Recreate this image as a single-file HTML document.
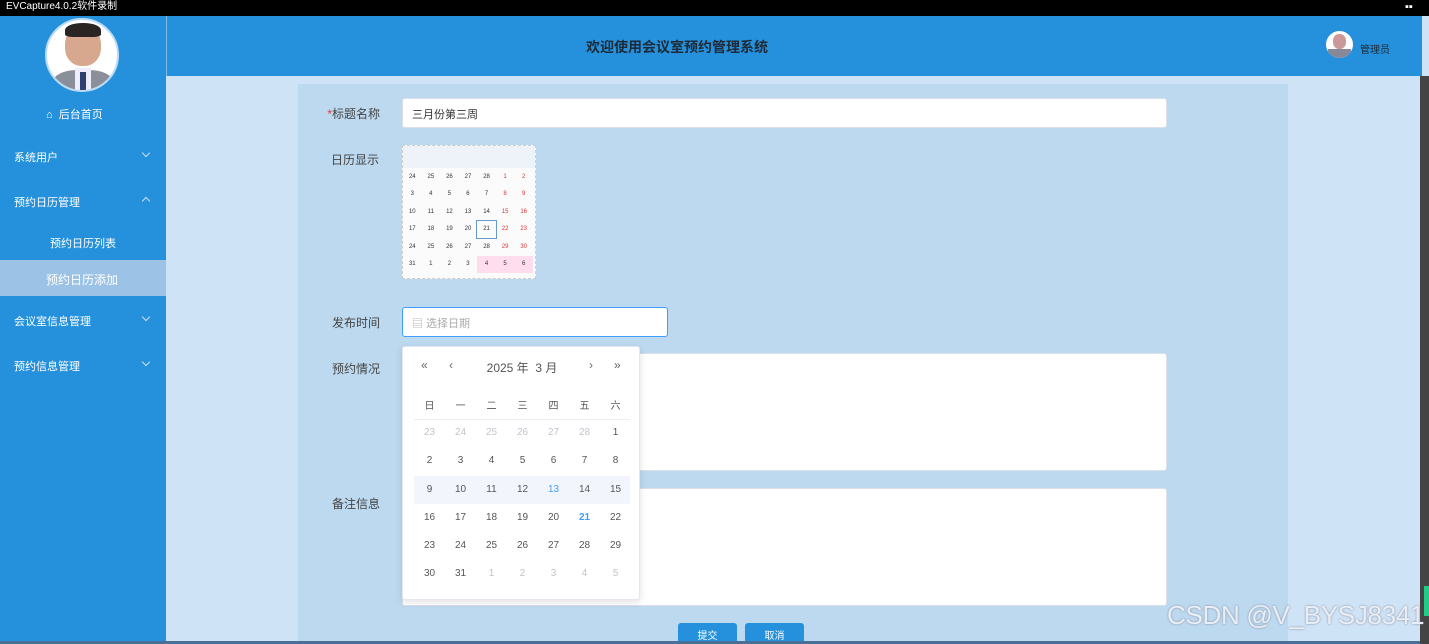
<!DOCTYPE html>
<html><head><meta charset="utf-8"><style>
*{margin:0;padding:0;box-sizing:border-box}
html,body{width:1429px;height:644px;overflow:hidden}
body{position:relative;background:#cfe3f6;font-family:"Liberation Sans","Noto Sans CJK SC",sans-serif;font-size:12px}
.abs{position:absolute}
.top{left:0;top:0;width:1429px;height:16px;background:#000;color:#fff;font-size:10px;line-height:14px;padding-left:6px}
.side{left:0;top:16px;width:166px;height:628px;background:#2591dd;color:#fff}
.hdr{left:166px;top:16px;width:1256px;height:60px;background:#2591dd;border-left:1px solid #7fbbe8}
.panel{left:298px;top:84px;width:990px;height:560px;background:#bcd9f0}
.mi{position:absolute;left:14px;font-size:11px;color:#fff}
.chev{position:absolute;left:143px;width:6px;height:6px;border-right:1px solid #cde;border-bottom:1px solid #cde}
.lbl{position:absolute;font-size:12px;color:#444;text-align:right;width:90px;left:290px}
.inp{position:absolute;background:#fff;border:1px solid #dcdfe6;border-radius:3px}
.cal td{width:31px;text-align:center;height:28.3px;font-size:10px;color:#555;padding:0}
.mini td{height:17.5px;text-align:center;font-size:6px;padding:0}
.btn{position:absolute;top:623px;width:59px;height:25px;background:#2591dd;color:#fff;font-size:10px;text-align:center;line-height:28px;border-radius:3px}
</style></head><body>
<div class="abs top">EVCapture4.0.2软件录制</div>
<div class="abs" style="left:1405px;top:1px;color:#fff;font-size:11px">▪▪</div>
<div class="abs side">
 <div class="abs" style="left:45px;top:2px;width:74px;height:74px;border-radius:50%;background:#fff;border:2px solid #bcdcf5;overflow:hidden">
  <div class="abs" style="left:18px;top:6px;width:36px;height:40px;border-radius:45%;background:#d8a88e"></div>
  <div class="abs" style="left:18px;top:3px;width:36px;height:14px;border-radius:50% 50% 20% 20%;background:#2a2522"></div>
  <div class="abs" style="left:6px;top:50px;width:60px;height:30px;border-radius:40% 40% 0 0;background:#8a8f99"></div>
  <div class="abs" style="left:28px;top:48px;width:16px;height:26px;background:#eef;"></div>
  <div class="abs" style="left:33px;top:52px;width:6px;height:22px;background:#2e3f70"></div>
 </div>
 <div class="abs" style="left:46px;top:90px;font-size:11px">⌂ &nbsp;后台首页</div>
 <div class="mi" style="top:133px">系统用户</div><div class="chev" style="top:134px;transform:rotate(45deg)"></div>
 <div class="mi" style="top:178px">预约日历管理</div><div class="chev" style="top:182px;transform:rotate(-135deg)"></div>
 <div class="mi" style="top:219px;left:50px">预约日历列表</div>
 <div class="abs" style="left:0;top:244px;width:166px;height:36px;background:#9cc3e6"></div>
 <div class="mi" style="top:255px;left:46px;font-size:12px">预约日历添加</div>
 <div class="mi" style="top:297px">会议室信息管理</div><div class="chev" style="top:298px;transform:rotate(45deg)"></div>
 <div class="mi" style="top:342px">预约信息管理</div><div class="chev" style="top:343px;transform:rotate(45deg)"></div>
</div>
<div class="abs hdr">
 <div class="abs" style="left:0;width:1020px;top:21px;text-align:center;font-size:14px;font-weight:bold;color:#1e2a36">欢迎使用会议室预约管理系统</div>
 <div class="abs" style="left:1159px;top:15px;width:27px;height:27px;border-radius:50%;background:#fff;overflow:hidden"><div class="abs" style="left:7px;top:3px;width:13px;height:15px;border-radius:45%;background:#c99"></div><div class="abs" style="left:2px;top:18px;width:23px;height:12px;background:#889"></div></div>
 <div class="abs" style="left:1193px;top:25px;font-size:10px;color:#1e2a36">管理员</div>
</div>
<div class="abs" style="left:1420px;top:76px;width:9px;height:568px;background:#444"></div>
<div class="abs" style="left:1424px;top:586px;width:5px;height:30px;background:#2c8"></div>
<div class="abs panel"></div>
<div class="lbl" style="top:105px"><span style="color:#e33">*</span>标题名称</div>
<div class="inp" style="left:402px;top:98px;width:765px;height:30px;padding:7px 9px;font-size:11px;color:#333">三月份第三周</div>
<div class="lbl" style="top:151px;width:89px">日历显示</div>
<div class="abs" style="left:402px;top:145px;width:134px;height:134px;background:#fbfbfc;border:1px dashed #ccc;font-size:5px;color:#333">
 <div style="height:22px;background:#eef3fa"></div>
 <table class="mini" style="border-collapse:collapse;width:130px">
 <tr><td>24</td><td>25</td><td>26</td><td>27</td><td>28</td><td style="color:#d33">1</td><td style="color:#d33">2</td></tr>
 <tr><td>3</td><td>4</td><td>5</td><td>6</td><td>7</td><td style="color:#d33">8</td><td style="color:#d33">9</td></tr>
 <tr><td>10</td><td>11</td><td>12</td><td>13</td><td>14</td><td style="color:#d33">15</td><td style="color:#d33">16</td></tr>
 <tr><td>17</td><td>18</td><td>19</td><td>20</td><td style="outline:1px solid #69c">21</td><td style="color:#d33">22</td><td style="color:#d33">23</td></tr>
 <tr><td>24</td><td>25</td><td>26</td><td>27</td><td>28</td><td style="color:#d33">29</td><td style="color:#d33">30</td></tr>
 <tr><td>31</td><td>1</td><td>2</td><td>3</td><td style="background:#fde">4</td><td style="background:#fde">5</td><td style="background:#fde">6</td></tr>
 </table>
</div>
<div class="lbl" style="top:314px">发布时间</div>
<div class="inp" style="left:402px;top:307px;width:266px;height:30px;border-color:#409eff;padding:7px 9px;font-size:11px;color:#aaa">▤ 选择日期</div>
<div class="lbl" style="top:360px">预约情况</div>
<div class="inp" style="left:402px;top:353px;width:765px;height:118px"></div>
<div class="lbl" style="top:495px">备注信息</div>
<div class="inp" style="left:402px;top:488px;width:765px;height:118px"></div>
<div class="abs" style="left:402px;top:346px;width:238px;height:254px;background:#fff;border:1px solid #e4e7ed;border-radius:3px;box-shadow:0 2px 8px rgba(0,0,0,.12)">
 <div class="abs" style="left:18px;top:11px;color:#666;font-size:12px">«</div>
 <div class="abs" style="left:46px;top:11px;color:#666;font-size:12px">‹</div>
 <div class="abs" style="left:0;width:238px;top:12px;text-align:center;color:#555;font-size:12px">2025 年 &nbsp;3 月</div>
 <div class="abs" style="left:186px;top:11px;color:#666;font-size:12px">›</div>
 <div class="abs" style="left:211px;top:11px;color:#666;font-size:12px">»</div>
 <div class="abs" style="left:11px;top:72px;width:216px;height:1px;background:#ebeef5"></div>
 <div class="abs" style="left:11px;top:129px;width:216px;height:28px;background:#f2f6fc"></div>
 <table class="cal" style="position:absolute;left:11px;top:43px;border-collapse:collapse">
 <tr><td>日</td><td>一</td><td>二</td><td>三</td><td>四</td><td>五</td><td>六</td></tr>
 <tr><td style="color:#c0c4cc">23</td><td style="color:#c0c4cc">24</td><td style="color:#c0c4cc">25</td><td style="color:#c0c4cc">26</td><td style="color:#c0c4cc">27</td><td style="color:#c0c4cc">28</td><td>1</td></tr>
 <tr><td>2</td><td>3</td><td>4</td><td>5</td><td>6</td><td>7</td><td>8</td></tr>
 <tr><td>9</td><td>10</td><td>11</td><td>12</td><td style="color:#409eff">13</td><td>14</td><td>15</td></tr>
 <tr><td>16</td><td>17</td><td>18</td><td>19</td><td>20</td><td style="color:#409eff;font-weight:bold">21</td><td>22</td></tr>
 <tr><td>23</td><td>24</td><td>25</td><td>26</td><td>27</td><td>28</td><td>29</td></tr>
 <tr><td>30</td><td>31</td><td style="color:#c0c4cc">1</td><td style="color:#c0c4cc">2</td><td style="color:#c0c4cc">3</td><td style="color:#c0c4cc">4</td><td style="color:#c0c4cc">5</td></tr>
 </table>
</div>
<div class="btn" style="left:678px">提交</div>
<div class="btn" style="left:745px">取消</div>
<div class="abs" style="left:0;top:641px;width:1420px;height:3px;background:#4a6f96"></div>
<div class="abs" style="left:1167px;top:600px;font-size:26px;letter-spacing:-0.3px;color:#e8eef5;text-shadow:0 0 2px #889">CSDN @V_BYSJ8341</div>
</body></html>
